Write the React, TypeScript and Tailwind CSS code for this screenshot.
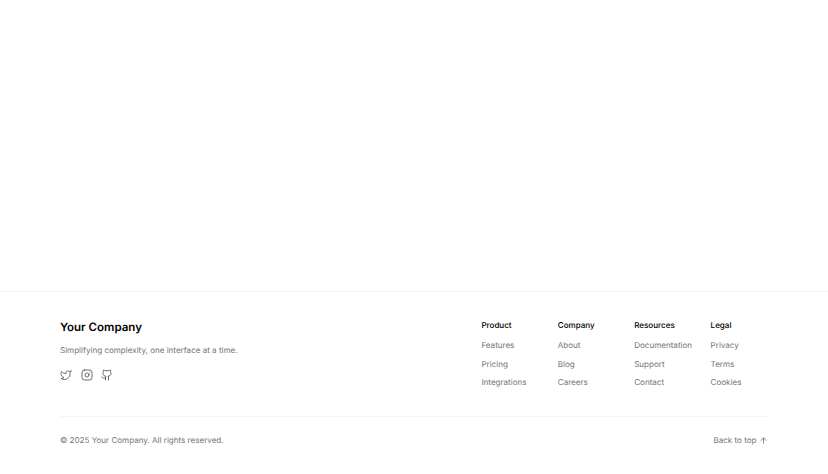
import { ArrowUp, Github, Instagram, Twitter } from "lucide-react";

const columns = [
  { title: "Product", links: ["Features", "Pricing", "Integrations"] },
  { title: "Company", links: ["About", "Blog", "Careers"] },
  { title: "Resources", links: ["Documentation", "Support", "Contact"] },
  { title: "Legal", links: ["Privacy", "Terms", "Cookies"] },
];

export default function App() {
  return (
    <div className="min-h-[474px] flex flex-col justify-end bg-white font-['Inter',sans-serif] [text-rendering:geometricPrecision]">
      <footer className="h-[183px] border-t border-neutral-100 bg-white">
        <div className="px-[60px] pt-[27px]">
          <div className="h-[98px] flex justify-between border-b border-neutral-100">
            <div>
              <h2 className="text-[11.5px] leading-[16px] font-semibold text-black">Your Company</h2>
              <p className="mt-[8px] text-[8.05px] leading-[14px] text-neutral-500">Simplifying complexity, one interface at a time.</p>
              <div className="mt-[12px] flex gap-[8.7px] text-neutral-600">
                <Twitter size={12} strokeWidth={1.7} />
                <Instagram size={12} strokeWidth={1.7} />
                <Github size={12} strokeWidth={1.7} />
              </div>
            </div>
            <div className="grid grid-cols-4 gap-x-[19px] w-[286.6px] h-fit">
              {columns.map((col) => (
                <div key={col.title}>
                  <h3 className="text-[8.05px] leading-[12px] font-medium text-black">{col.title}</h3>
                  <ul className="mt-[8px] flex flex-col gap-[6.5px]">
                    {col.links.map((l) => (
                      <li key={l} className="text-[8.05px] leading-[12px] text-neutral-500">{l}</li>
                    ))}
                  </ul>
                </div>
              ))}
            </div>
          </div>
          <div className="mt-[17px] flex items-center justify-between text-[8.05px] leading-[12px] text-neutral-500">
            <span>© 2025 Your Company. All rights reserved.</span>
            <span className="flex items-center gap-[2.5px]">Back to top <ArrowUp size={9} strokeWidth={2.2} /></span>
          </div>
        </div>
      </footer>
    </div>
  );
}
